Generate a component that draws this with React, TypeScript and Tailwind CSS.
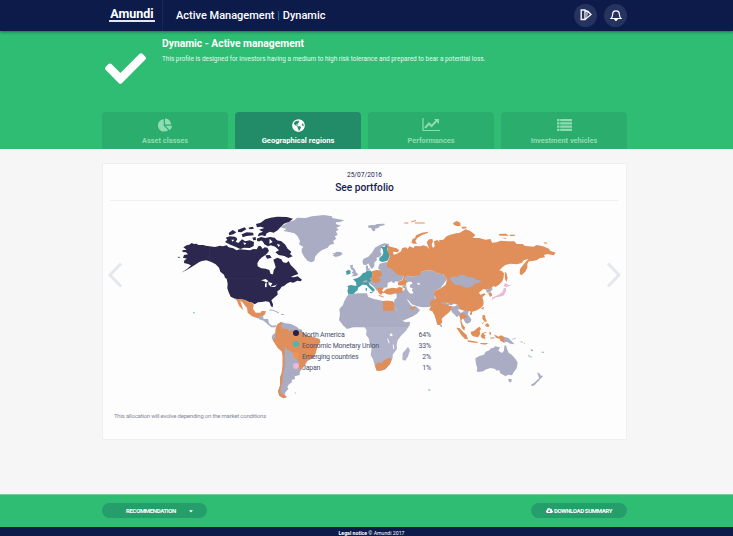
import React from "react";
import { FaCheck, FaChartPie, FaGlobeAmericas, FaCaretDown, FaCloudDownloadAlt } from "react-icons/fa";

const NAVY = "#2c274e";
const GREY = "#a9acc3";
const ORANGE = "#e08e5a";
const TEAL = "#469da5";
const PINK = "#eab9d6";
const SEA = "#fdfdfd";

function NorthAmerica() {
  return (
    <g transform="translate(170 205) scale(.33333)">
      <g fill={NAVY} strokeLinejoin="round">
        <path d="M40 127L50 121L58 119L65 114L72 117L80 116L85 120L100 120L107 122L118 124L135 126L150 122L158 124L170 121L176 127L190 130L199 136L210 133L225 134L240 136L250 132L260 133L266 122L273 124L278 132L284 127L292 128L297 137L292 145L283 152L276 157L268 164L262 175L263 184L274 190L287 191L298 195L302 207L309 208L311 196L317 187L314 176L310 164L322 158L334 163L339 172L349 174L356 168L362 180L372 190L380 199L385 207L374 211L362 216L372 217L383 214L396 224L392 229L382 227L370 233L360 231L350 236L342 243L335 245L329 254L322 259L323 269L314 277L304 286L309 298L308 307L303 304L298 291L288 289L275 291L264 292L254 298L247 293L235 290L225 285L210 283L195 281L182 275L176 262L172 250L173 236L170 221L165 218L162 209L151 200L147 188L137 178L124 171L109 166L96 168L88 171L73 181L61 188L50 195L34 203L52 191L63 181L54 177L42 174L43 166L51 161L39 158L42 150L54 148L48 142L38 141L37 136L50 134Z" />
        <path d="M258 57L272 53L286 43L302 38L322 35L350 36L369 41L358 50L342 56L331 67L323 76L311 83L300 80L290 85L286 94L276 91L263 94L267 85L279 80L267 74L283 69L272 65L261 67Z" />
        <path d="M167 98L179 94L195 95L203 101L197 110L205 114L216 103L226 109L239 106L252 111L251 123L239 129L222 128L211 132L196 125L181 119L165 111L172 104ZM176 84L188 75L199 82L190 88L178 91ZM204 74L224 67L229 73L214 82L204 81ZM215 88L230 82L249 83L251 91L230 93L218 97ZM260 101L273 96L286 99L300 96L314 98L321 106L334 109L346 119L353 131L364 140L360 147L368 154L355 159L343 153L326 150L316 142L327 136L316 125L302 121L294 124L283 118L278 109L262 109ZM235 68L248 65L252 71L239 73ZM247 98L257 96L258 105L250 106ZM286 151L299 150L305 158L291 161ZM22 155L31 156L27 159Z" />
      </g>
      <g fill={SEA}>
        <path d="M273 226L287 222L296 229L288 232L281 228ZM285 236L290 231L290 246L285 247ZM295 231L307 235L302 244L296 239ZM299 245L317 241L322 236L315 246Z" />
        <path d="M200 99L211 96L204 106ZM267 116L273 105L280 116L276 126ZM299 101L308 111L298 116ZM321 116L331 120L325 126ZM304 134L315 132L309 143ZM219 112L229 115L224 120ZM184 104L193 104L188 110Z" />
      </g>
      <path d="M119 124V168M170 220H274" stroke="#45416a" strokeWidth="1" fill="none" />
      <path fill={ORANGE} d="M195 281L210 283L225 285L235 290L247 293L251 299L249 311L257 323L271 323L276 317L288 319L284 329L274 337L264 340L246 334L233 323L231 309L217 292L211 287L216 304L220 316L207 303L202 289Z" />
      <path fill={TEAL} d="M69 321h6v4h-6z" opacity=".5" />
      <path fill="none" stroke={GREY} strokeWidth="3" d="M298 315L310 316L327 324M333 328L342 329" />
      <path fill={GREY} d="M268 332L278 331L281 342L294 342L297 355L306 362L319 361L316 367L304 367L293 358L281 347L266 342Z" />
    </g>
  );
}

function Islands() {
  return (
    <g transform="translate(95 155) scale(.33333)" fill={GREY}>
      <path d="M554 216L572 207L582 200L598 196L606 188L632 189L651 184L686 180L711 184L712 189L748 196L735 201L722 202L724 208L738 212L724 218L731 224L723 229L728 240L719 244L724 251L714 258L718 266L704 270L698 278L680 286L669 295L661 304L658 317L650 322L638 318L628 306L620 292L620 281L625 276L612 268L615 258L608 244L598 235L578 230L565 228L575 222Z" />
      <path d="M711 294L719 295L724 290L738 291L743 297L734 303L721 306L712 301L718 299Z" />
      <path d="M819 212L829 210L839 210L846 207L869 206L868 211L855 213L850 219L840 221L841 227L834 229L828 219L820 218Z" />
    </g>
  );
}

function Europe() {
  return (
    <g transform="translate(300 205) scale(.33333)">
      <g fill={GREY}>
        <path d="M187 170L191 161L205 155L216 143L225 128L239 120L253 115L268 117L264 124L252 122L243 130L241 140L245 146L240 155L229 158L231 165L223 173L223 184L216 192L211 187L205 175L199 180L190 179Z" />
        <path d="M150 181L159 179L158 187L164 192L169 203L175 207L169 213L154 214L161 207L155 203L160 197L153 193ZM197 184L204 181L204 191L210 190L209 196L199 197Z" />
        <path d="M239 176L262 170L260 184L275 190L289 203L310 212L307 224L295 230L285 229L287 236L278 235L275 229L266 233L263 247L251 248L247 255L236 250L231 257L222 246L212 238L202 232L190 235L192 226L214 226L216 215L240 213L241 196L234 190Z" />
        <path d="M289 259L310 257L316 251L305 246L311 242L327 248L330 258L341 263L347 269L339 276L349 281L363 289L378 291L391 294L397 302L388 306L370 307L350 304L341 296L333 295L328 286L320 283L332 300L341 305L347 304L360 315L351 326L339 334L319 343L308 347L299 338L293 323L282 300L283 284L290 279Z" />
      </g>
      <path fill={TEAL} d="M242 126L253 126L260 119L264 125L261 133L267 145L268 157L262 167L247 171L238 167L238 159L247 151L250 143L248 133ZM138 199L146 194L152 198L151 206L140 210ZM142 243L153 240L169 243L168 232L159 223L170 220L178 216L184 211L188 205L197 202L200 197L213 197L217 203L217 215L211 221L214 227L205 232L209 240L219 248L225 255L219 261L210 251L199 240L187 239L181 244L174 248L173 256L166 261L161 267L145 267L142 258L145 249ZM197 249L201 249L201 257L197 257ZM209 261L218 261L217 265L211 264Z" />
      <path fill={GREY} d="M189 228L201 225L203 231L191 233Z" />
      <path fill={ORANGE} d="M216 199L229 195L241 196L246 207L243 216L231 217L241 222L240 230L228 235L218 229L211 222L217 214ZM231 250L242 248L251 250L246 256L250 261L259 252L278 248L304 252L309 262L299 264L281 266L273 269L261 268L254 264L247 264L245 269L238 267L233 258ZM248 288L266 287L280 290L283 303L281 317L249 316ZM328 308L337 307L344 303L346 308L340 314L331 313Z" />
      <path stroke={ORANGE} strokeWidth="3" d="M236 271L251 276" />
    </g>
  );
}

function Asia() {
  return (
    <g transform="translate(400 205) scale(.33333)">
      <path fill={GREY} d="M15 213L40 214L60 208L65 200L80 196L98 197L110 205L130 208L141 223L121 250L103 258L104 277L109 282L95 289L90 305L65 305L38 299L24 284L12 265L18 251Z" />
      <path fill={ORANGE} d="M-38 121L-26 126L-10 130L-2 136L-7 142L-21 140L-19 149L-9 146L3 139L7 129L18 127L23 132L28 124L41 129L44 123L61 124L70 121L80 124L88 133L80 112L87 103L97 102L99 109L95 119L99 129L104 124L102 109L112 105L119 112L117 105L130 104L140 94L151 89L168 85L178 84L197 73L211 78L226 90L218 99L238 99L256 104L272 102L276 113L290 112L302 107L322 109L343 109L350 117L369 117L373 122L400 125L410 120L429 124L447 131L450 137L467 143L461 151L442 147L432 150L435 157L418 160L410 166L397 168L387 169L382 176L382 188L376 200L364 211L359 206L360 192L367 183L376 172L385 162L371 166L365 174L351 178L331 176L316 180L309 185L298 196L306 198L312 205L311 217L307 229L297 239L286 246L281 243L271 251L259 254L250 252L243 258L237 263L241 269L253 265L257 268L247 277L251 291L250 301L242 309L231 316L217 320L214 326L210 318L197 319L188 316L176 312L174 300L164 296L150 298L136 292L147 302L163 305L161 317L153 316L145 324L133 334L125 341L127 352L119 361L112 359L104 332L97 319L87 315L93 304L89 296L94 286L109 281L102 269L103 258L120 251L137 239L141 223L130 208L110 205L98 197L80 196L65 200L60 210L40 214L20 212L14 221L21 232L18 242L-7 241L-5 231L8 225L11 213L-10 208L-25 192L-41 185L-38 171L-31 157L-37 135Z" />
      <path fill={ORANGE} d="M-8 243L8 249L7 258L-2 262L-8 256ZM34 112L38 102L45 99L48 91L66 83L85 80L83 84L66 90L52 99L46 108L51 116L39 116ZM159 54L170 48L181 53L182 62L172 64L162 60ZM184 65L199 65L200 70L187 71ZM314 200L319 204L323 219L319 231L315 222ZM296 87L318 86L327 92L299 92ZM329 89L345 89L344 93L330 93ZM306 98L319 99L317 102ZM432 112L442 113L441 116L431 115ZM264 263L273 262L277 271L270 276ZM243 310L252 305L250 314ZM248 332L253 329L255 337L261 350L253 349Z" />
      <path d="M13 54L25 54M34 50L48 47M45 54L74 54" stroke={ORANGE} strokeWidth="3" />
      <path fill={GREY} d="M148 220L161 214L173 216L179 209L193 210L203 216L217 217L226 222L245 228L239 233L225 235L218 244L199 249L181 241L166 240L157 231ZM258 256L276 247L278 253L270 261L261 263ZM121 291L136 293L148 298L158 295L158 300L146 301L124 296Z" />
      <path fill={SEA} d="M18 235L25 230L34 230L38 235L31 239L29 247L38 250L36 256L41 265L31 266L24 259L20 250ZM53 233L60 235L58 240L51 237ZM-37 234L-27 230L-20 234L-13 231L-6 239L0 246L-10 248L-26 246L-38 248Z" />
      <path fill={PINK} d="M276 285L276 279L289 272L301 266L309 258L311 249L318 249L318 259L312 271L299 275L288 277ZM310 242L316 234L325 240L336 239L326 244L319 247Z" />
    </g>
  );
}

function SouthAndAfrica() {
  return (
    <g transform="translate(250 300) scale(.33333)">
      <path fill={GREY} d="M78 82L82 73L93 66L107 70L123 72L140 80L151 91L162 100L167 106L182 109L208 117L211 126L202 139L197 159L190 174L172 182L163 198L153 209L149 218L149 225L134 229L135 237L125 239L126 247L117 253L112 261L115 267L106 277L104 284L111 291L100 295L88 287L84 274L90 257L90 233L95 219L98 197L98 166L95 154L83 143L70 123L65 113L68 104L76 99Z" />
      <path fill={ORANGE} d="M78 82L83 73L93 66L98 70L92 79L101 86L112 87L119 95L123 90L140 98L152 92L161 99L167 106L182 109L208 117L211 126L202 139L197 159L190 174L172 182L163 198L153 209L142 203L149 190L142 181L140 169L129 158L114 150L104 139L105 155L103 176L105 184L102 209L98 226L97 248L91 269L94 281L105 286L110 292L100 295L88 287L84 274L90 257L90 233L95 219L98 197L98 166L95 154L83 143L70 123L68 119L78 111L76 99Z" />
      <path fill={GREY} d="M295 -17L325 -20L351 -20L354 -10L371 -3L383 -1L399 3L430 5L433 18L444 39L456 61L466 67L480 65L479 76L474 82H310L291 87L279 76L267 60L270 43L268 27L279 15L283 3Z" />
      <path fill="#b0b3c9" d="M343 81H475L468 92L453 107L443 121L440 134L441 147L428 164L428 174L421 190L406 208L392 212L380 212L375 199L369 178L362 165L365 144L359 130L356 115L348 104L350 91ZM474 140L480 151L474 169L466 182L457 179L458 159L466 151Z" />
      <path fill={ORANGE} d="M399 3L415 2L430 5L434 18L431 32L399 32ZM375 196L385 187L394 190L402 181L411 176L420 173L425 178L420 192L406 208L392 212L380 212Z" />
      <path fill={SEA} d="M419 103L426 100L428 107L421 109ZM411 115L414 116L419 129L416 130ZM428 133L431 134L433 147L430 147Z" />
      <path fill={TEAL} d="M148 86L156 89L157 95L151 95ZM535 268h6v4h-6z" opacity=".6" />
      <path fill={GREY} d="M134 277L139 278L136 281Z" />
    </g>
  );
}

function Oceania() {
  return (
    <g transform="translate(430 290) scale(.33333)">
      <path fill={GREY} d="M31 102L37 106L35 111L30 109ZM64 52L75 49L84 43L88 54L84 61L93 69L105 61L117 64L113 72L124 88L122 96L112 101L106 98L100 87L90 84L87 76L81 82L74 74L65 65ZM136 205L148 198L162 194L167 185L178 181L183 175L190 174L195 169L210 172L205 182L216 189L222 182L223 168L228 166L231 177L236 188L245 194L257 208L263 218L260 235L251 247L246 256L234 254L227 259L211 250L207 240L200 242L194 236L181 234L166 239L160 244L146 246L140 244L142 234L138 222ZM234 267L245 267L244 276L238 277ZM321 247L330 251L332 257L340 257L333 265L328 269L326 260ZM325 266L330 269L323 275L314 285L306 289L303 284L313 278ZM222 140L235 144L242 151L254 163L241 161L230 155L222 158ZM302 177L309 180L309 184L303 182ZM335 185L342 185L341 189L335 188Z" />
      <path fill={ORANGE} d="M89 76L96 68L108 76L111 84L98 85L94 91L98 104L105 112L103 122L95 113L92 99ZM79 113L88 114L99 125L110 135L114 148L105 147L94 136ZM112 151L129 153L144 156L142 159L115 156ZM122 125L132 123L141 115L149 110L153 116L149 124L151 131L144 142L129 139L124 134ZM156 130L169 125L169 128L160 131L168 137L164 139L167 147L156 145L152 138ZM192 134L201 137L205 140L213 136L222 140L222 158L211 152L209 146L198 143ZM178 127L183 126L183 135L178 133ZM158 75L166 77L165 88L170 94L163 94L157 86ZM165 105L172 99L178 105L176 111L169 110ZM155 101L164 93L158 102ZM150 159L162 159L175 159L166 164L152 162ZM180 143L193 142L193 145L182 146ZM119 69L126 66L126 74L120 74Z" />
      <path d="M246 148L258 144M271 155L279 157M281 159L285 161" stroke={GREY} strokeWidth="2" />
      <path d="M294 196L305 202" stroke="#a9d3d8" strokeWidth="4" />
    </g>
  );
}

const legend = [
  { name: "North America", share: "64%", dot: "bg-[#26204b]" },
  { name: "Economic Monetary Union", share: "33%", dot: "bg-[#49b7b4]" },
  { name: "Emerging countries", share: "2%", dot: "bg-[#f3924d]" },
  { name: "Japan", share: "1%", dot: "bg-[#efb6dc]" },
];

function WorldMap() {
  return (
    <div className="relative mx-auto h-[200px] w-[400px]">
      <svg viewBox="170 205 400 200" className="block h-full w-full">
        <Islands />
        <NorthAmerica />
        <Europe />
        <Asia />
        <SouthAndAfrica />
        <Oceania />
      </svg>
      <ul className="absolute left-[123px] top-[125px] w-[138px] text-[7px] leading-[11px] text-[#4b5170]">
        {legend.map((item) => (
          <li key={item.name} className="flex h-[11px] items-center">
            <span className={`mb-[5px] mr-[3px] size-[6px] rounded-full ${item.dot}`} />
            <span className="flex-1 tracking-[-0.22px]">{item.name}</span>
            <span className="tracking-[-0.2px]">{item.share}</span>
          </li>
        ))}
      </ul>
    </div>
  );
}

function LineChartIcon() {
  return (
    <svg viewBox="0 0 18 14" className="h-[14px] w-[18px]" fill="none" stroke="currentColor">
      <path d="M1 0V12.5H18" strokeWidth="1.2" />
      <path d="M3 10L7 5.5L9.5 8L15 2.5" strokeWidth="2" />
      <path d="M12 1H17V6Z" fill="currentColor" stroke="none" />
    </svg>
  );
}

function ListIcon() {
  return (
    <svg viewBox="0 0 15 12" className="h-3 w-[15px]" stroke="currentColor" strokeWidth="2.2">
      <path d="M0 1.2H2.5M3.2 1.2H15M0 4.4H2.5M3.2 4.4H15M0 7.6H2.5M3.2 7.6H15M0 10.8H2.5M3.2 10.8H15" />
    </svg>
  );
}

const tabs = [
  { label: "Asset classes", icon: <FaChartPie size={14} /> },
  { label: "Geographical regions", icon: <FaGlobeAmericas size={13} />, active: true },
  { label: "Performances", icon: <LineChartIcon /> },
  { label: "Investment vehicles", icon: <ListIcon /> },
];

function Chevron({ flip = false }: { flip?: boolean }) {
  return (
    <svg viewBox="0 0 14 26" className={`h-[26px] w-[14px] ${flip ? "-scale-x-100" : ""}`} fill="none">
      <path d="M13 1.5L2 13L13 24.5" stroke="#e4e7ec" strokeWidth="3" />
    </svg>
  );
}

export default function App() {
  return (
    <div className="flex h-[536px] w-[733px] flex-col overflow-hidden bg-[#f6f6f6] font-['Roboto','Liberation_Sans',sans-serif]">
      <header className="z-10 flex h-[31px] shrink-0 items-center bg-[#0c1b4a] pl-[109px] pr-[106px] text-white shadow-[0_1px_3px_rgba(0,40,40,0.5)]">
        <div className="flex h-full w-[54px] items-start border-r border-[#1a2851] pt-[7px]">
          <span className="w-[46px] border-b-2 border-[#e4e6ed] text-center text-[12.5px] font-bold leading-[13px]">Amundi</span>
        </div>
        <h1 className="ml-[13px] flex-1 whitespace-nowrap pt-px text-[11px] font-medium">
          Active Management <span className="text-[#0c7fa5]">|</span> Dynamic
        </h1>
        <div className="mt-[-1px] flex gap-[7px]">
          <span className="flex size-[23px] items-center justify-center rounded-full bg-[#27335f]">
            <svg viewBox="0 0 12 12" className="size-3" fill="none" stroke="#f3f4f8" strokeWidth="1.4">
              <path d="M1.2 1H5V10.5H1.2ZM5 1.5L8 2.5L5 9.5M8 2.5L11 5.5L5 10.5" />
              <path d="M5 4L8 3L7 8L5 9Z" fill="#9ba2b9" stroke="none" />
            </svg>
          </span>
          <span className="flex size-[23px] items-center justify-center rounded-full bg-[#27335f]">
            <svg viewBox="0 0 12 12" className="size-3" fill="none" stroke="#fff" strokeWidth="1.2">
              <path d="M1 9.5C2.5 8.5 2.5 7 2.7 4.8C2.9 1 9.1 1 9.3 4.8C9.5 7 9.5 8.5 11 9.5Z" />
              <path d="M4.7 10L6 11.5L7.3 10Z" fill="#fff" />
            </svg>
          </span>
        </div>
      </header>

      <section className="flex h-[118px] shrink-0 flex-col justify-between bg-[#2ebd73] pl-[102px] pr-[106px] text-white">
        <div className="flex">
          <div className="w-[60px] pl-[3px] pt-[17px]">
            <FaCheck size={41} />
          </div>
          <div className="pt-[5px]">
            <h2 className="text-[10.3px] font-bold leading-[15px]">Dynamic - Active management</h2>
            <p className="mt-1 whitespace-nowrap text-[6.45px] leading-[9px] text-[#e3f8ec]">
              This profile is designed for investors having a medium to high risk tolerance and prepared to bear a potential loss.
            </p>
          </div>
        </div>
        <nav className="grid grid-cols-4 gap-[7px]">
          {tabs.map((tab) => (
            <div
              key={tab.label}
              className={`flex h-[37px] flex-col items-center rounded-t-sm pt-[6px] font-bold ${
                tab.active ? "bg-[#228c68] text-[7.6px] text-white" : "bg-[#2aad6d] text-[7.4px] text-[#90dcb2]"
              }`}
            >
              <span className="flex h-[14px] items-center">{tab.icon}</span>
              <span className="mt-[4px] leading-[10px]">{tab.label}</span>
            </div>
          ))}
        </nav>
      </section>

      <main className="flex-1 pl-[102px] pr-[106px] pt-[14px]">
        <section className="h-[277px] border border-[#efeff0] bg-[#fdfdfd] text-[#15224c]">
          <div className="mx-[7px] h-[37px] border-b border-[#f0f0f1] pt-[7px] text-center">
            <p className="text-[6.6px] leading-[9px]">25/07/2016</p>
            <h3 className="mt-px text-[10.2px] font-medium leading-[13px]">See portfolio</h3>
          </div>
          <div className="mt-1 flex items-start px-[5px]">
            <div className="pt-[57px]">
              <Chevron />
            </div>
            <div className="ml-[48px]">
              <WorldMap />
            </div>
            <div className="ml-auto pt-[57px]">
              <Chevron flip />
            </div>
          </div>
          <p className="ml-[11px] mt-[6px] text-[6px] leading-[9px] tracking-[-0.21px] text-[#858998]">
            This allocation will evolve depending on the market conditions
          </p>
        </section>
      </main>

      <div className="flex h-[33px] shrink-0 items-center justify-between border-t border-[#6fcf9d] bg-[#2ebd73] pl-[102px] pr-[106px] text-[6px] font-bold text-white">
        <button className="mb-px flex h-[15px] w-[105px] items-center rounded-full bg-[#269e6b] pl-[23px]">
          <span className="w-[52px] tracking-[-0.35px]">RECOMMENDATION</span>
          <FaCaretDown size={6} className="ml-[11px]" />
        </button>
        <button className="mb-px flex h-[15px] w-[96px] items-center justify-center gap-[1px] rounded-full bg-[#269e6b]">
          <FaCloudDownloadAlt size={7} />
          <span className="tracking-[-0.35px]">DOWNLOAD SUMMARY</span>
        </button>
      </div>
      <footer className="flex h-[9px] shrink-0 items-center justify-center bg-[#0c1b4a] pl-[10px] pt-[3px] text-[5.2px] leading-[8px] text-white">
        <span><b>Legal notice</b> © Amundi 2017</span>
      </footer>
    </div>
  );
}
